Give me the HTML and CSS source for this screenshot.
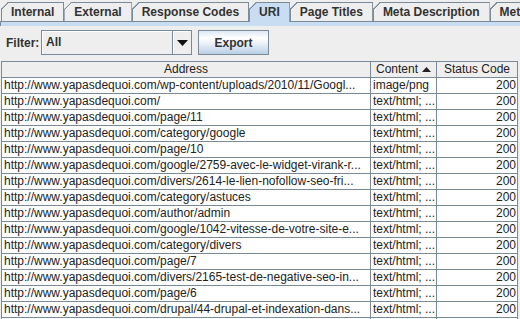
FILE: index.html
```html
<!DOCTYPE html>
<html lang="en">

<head>
    <meta charset="UTF-8">
    <meta name="viewport" content="width=device-width, initial-scale=1.0">
    <title>URI</title>
    <link rel="stylesheet" href="styles.css">
</head>

<body>
    <div class="tabs">
        <div class="tab">Internal</div>
        <div class="tab">External</div>
        <div class="tab">Response Codes</div>
        <div class="tab is-active">URI</div>
        <div class="tab">Page Titles</div>
        <div class="tab">Meta Description</div>
        <div class="tab">Meta Keywords</div>
    </div>
    <div class="tab-strip"></div>

    <div class="toolbar">
        <span class="filter-label">Filter:</span>
        <div class="combo">
            <span class="combo-value">All</span>
            <span class="combo-arrow">
                <svg width="11" height="6" viewBox="0 0 11 6"><path d="M0 0 H11 L5.5 6 Z" fill="#111"/></svg>
            </span>
        </div>
        <button class="btn" type="button">Export</button>
    </div>

    <table class="grid">
        <thead>
            <tr>
                <th class="col-addr">Address</th>
                <th class="col-type">Content<svg class="sort" width="9" height="5" viewBox="0 0 9 5"><path d="M0 5 L4.5 0 L9 5 Z" fill="#222"/></svg></th>
                <th class="col-code">Status Code</th>
            </tr>
        </thead>
        <tbody>
            <tr><td>http://www.yapasdequoi.com/wp-content/uploads/2010/11/Googl...</td><td>image/png</td><td class="num">200</td></tr>
            <tr><td>http://www.yapasdequoi.com/</td><td>text/html; ...</td><td class="num">200</td></tr>
            <tr><td>http://www.yapasdequoi.com/page/11</td><td>text/html; ...</td><td class="num">200</td></tr>
            <tr><td>http://www.yapasdequoi.com/category/google</td><td>text/html; ...</td><td class="num">200</td></tr>
            <tr><td>http://www.yapasdequoi.com/page/10</td><td>text/html; ...</td><td class="num">200</td></tr>
            <tr><td>http://www.yapasdequoi.com/google/2759-avec-le-widget-virank-r...</td><td>text/html; ...</td><td class="num">200</td></tr>
            <tr><td>http://www.yapasdequoi.com/divers/2614-le-lien-nofollow-seo-fri...</td><td>text/html; ...</td><td class="num">200</td></tr>
            <tr><td>http://www.yapasdequoi.com/category/astuces</td><td>text/html; ...</td><td class="num">200</td></tr>
            <tr><td>http://www.yapasdequoi.com/author/admin</td><td>text/html; ...</td><td class="num">200</td></tr>
            <tr><td>http://www.yapasdequoi.com/google/1042-vitesse-de-votre-site-e...</td><td>text/html; ...</td><td class="num">200</td></tr>
            <tr><td>http://www.yapasdequoi.com/category/divers</td><td>text/html; ...</td><td class="num">200</td></tr>
            <tr><td>http://www.yapasdequoi.com/page/7</td><td>text/html; ...</td><td class="num">200</td></tr>
            <tr><td>http://www.yapasdequoi.com/divers/2165-test-de-negative-seo-in...</td><td>text/html; ...</td><td class="num">200</td></tr>
            <tr><td>http://www.yapasdequoi.com/page/6</td><td>text/html; ...</td><td class="num">200</td></tr>
            <tr><td>http://www.yapasdequoi.com/drupal/44-drupal-et-indexation-dans...</td><td>text/html; ...</td><td class="num">200</td></tr>
            <tr><td></td><td></td><td class="num"></td></tr>
        </tbody>
    </table>
</body>

</html>
```

FILE: styles.css
```css
* {
    margin: 0;
    padding: 0;
    box-sizing: border-box;
}

body {
    width: 520px;
    height: 319px;
    overflow: hidden;
    background: #eeeeee;
    font-family: "Liberation Sans", Arial, sans-serif;
    font-size: 12px;
    color: #333333;
}

/* tab row */
.tabs {
    display: flex;
    align-items: flex-start;
    height: 22px;
    padding: 2px 0 0 1px;
    border-bottom: 1px solid #7a8a99;
    white-space: nowrap;
}

.tab {
    position: relative;
    flex: none;
    height: 19px;
    line-height: 18px;
    padding: 0 9px 0 9px;
    border: 1px solid #7a8a99;
    border-bottom: 0;
    background: #eeeeee;
    font-weight: bold;
    clip-path: polygon(7px 0, 100% 0, 100% 100%, 0 100%, 0 7px);
}

.tab::before {
    content: "";
    position: absolute;
    left: -1px;
    top: -1px;
    width: 8px;
    height: 8px;
    background: linear-gradient(to bottom right, #7a8a99 52%, transparent 52%);
}

.tab.is-active {
    height: 20px;
    background: #c8ddf2;
}

.tab-strip {
    height: 4px;
    background: #c8ddf2;
    border-left: 1px solid #7a8a99;
}

/* filter row */
.toolbar {
    display: flex;
    align-items: center;
    height: 25px;
    margin: 4px 0 6px;
    padding-left: 6px;
}

.filter-label {
    width: 35px;
    font-weight: bold;
}

.combo {
    display: flex;
    width: 151px;
    height: 25px;
    margin-right: 6px;
    border: 1px solid #7a8a99;
    background: #eeeeee;
}

.combo-value {
    flex: 1;
    padding-left: 4px;
    line-height: 22px;
    font-weight: bold;
    box-shadow: inset 1px 1px #ffffff;
}

.combo-arrow {
    width: 19px;
    display: flex;
    align-items: center;
    justify-content: center;
    border-left: 1px solid #7a8a99;
    box-shadow: inset 1px 1px #ffffff;
}

.btn {
    width: 71px;
    height: 25px;
    border: 1px solid #7a8a99;
    background: linear-gradient(#dde8f3 0%, #ffffff 30%, #eef3f9 50%, #b8cfe5 100%);
    font-family: "Liberation Sans", Arial, sans-serif;
    font-size: 12px;
    font-weight: bold;
    color: #333333;
}

/* results table */
.grid {
    width: 517px;
    margin-left: 1px;
    table-layout: fixed;
    border-spacing: 0;
    border-left: 1px solid #7a8a99;
    border-top: 1px solid #7a8a99;
    background: #ffffff;
}

.grid th,
.grid td {
    height: 16px;
    padding: 0 2px;
    line-height: 15px;
    border-right: 1px solid #7a8a99;
    border-bottom: 1px solid #7a8a99;
    white-space: nowrap;
    overflow: hidden;
    text-align: left;
    color: #222222;
}

.grid th {
    background: #eeeeee;
    font-weight: normal;
    text-align: center;
}

.col-addr {
    width: 369px;
}

.col-type {
    width: 66px;
}

.col-code {
    width: 81px;
}

.sort {
    margin-left: 4px;
    vertical-align: 1px;
}

.grid td.num {
    text-align: right;
    padding-right: 1px;
}
```
